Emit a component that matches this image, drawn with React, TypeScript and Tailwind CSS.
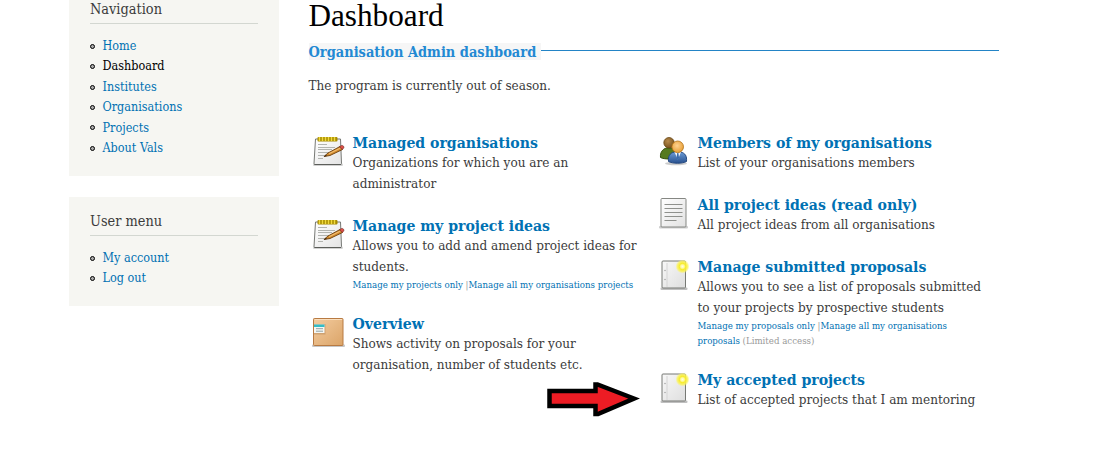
import type { ReactNode } from "react";

function NotepadIcon() {
  return (
    <svg width="34" height="34" viewBox="0 0 34 34" className="mt-px shrink-0">
      <defs>
        <linearGradient id="pad" x1="0" y1="0" x2="1" y2="1">
          <stop offset="0" stopColor="#ffffff" />
          <stop offset="1" stopColor="#e4e4e4" />
        </linearGradient>
      </defs>
      <rect x="1" y="29.5" width="30" height="2.5" rx="1.2" fill="#000" opacity=".18" />
      <path d="M3.500 5h25l1 24.500a1 1 0 0 1-1 1H3a1 1 0 0 1-1-1z" fill="url(#pad)" stroke="#777975" />
      <path d="M2.500 30.500h26.500" stroke="#5c5e5a" />
      <rect x="5.500" y="3" width="20" height="4.500" rx="1" fill="#a68a00" />
      <path d="M7.500 3v4M10.500 3v4M13.500 3v4M16.500 3v4M19.500 3v4M22.500 3v4" stroke="#f0d93c" strokeWidth="1.500" />
      <path d="M6 10.500h9M6 13.500h17M6 15.500h14M6 18.500h11M6 21.500h6M6 24.500h5" stroke="#b2b4b0" />
      <path d="M12 22.500l4-3.500L28 12.500l2.500 3L18 21.500z" fill="#d08a2c" stroke="#6b3d0c" strokeWidth=".9" />
      <path d="M17 19.700l11.500-5.700" stroke="#f3bd70" strokeWidth="1.100" />
      <path d="M27.500 12.700l2-1.200c1.800-.5 3 1.500 2.200 2.700l-1.700 1.300z" fill="#dc5047" stroke="#6d2320" strokeWidth=".6" />
      <path d="M11.500 22.800l2.200-2 1.300 1.300z" fill="#3b2a18" />
    </svg>
  );
}

function BoxIcon() {
  return (
    <svg width="34" height="34" viewBox="0 0 34 34" className="mt-[2px] shrink-0">
      <defs>
        <linearGradient id="box" x1="0" y1="0" x2="1" y2="1">
          <stop offset="0" stopColor="#f4cda0" />
          <stop offset="1" stopColor="#dba468" />
        </linearGradient>
      </defs>
      <rect x="0" y="28.500" width="33" height="2.500" rx="1" fill="#000" opacity=".22" />
      <rect x="1.500" y="2.500" width="29.500" height="27" rx=".8" fill="url(#box)" stroke="#b87a42" />
      <path d="M3 3.500h27" stroke="#fadfbe" />
      <path d="M2 8h11.500v10.500H2z" fill="#b98d5c" opacity=".55" />
      <rect x="2" y="8.500" width="10.500" height="8.500" fill="#f4f6f3" />
      <rect x="2" y="8.500" width="10.500" height="2.500" fill="#35bcc6" />
      <path d="M4 12.700h7M4 15.200h7" stroke="#93a3a3" />
    </svg>
  );
}

function PeopleIcon() {
  return (
    <svg width="34" height="34" viewBox="0 0 34 34" className="mt-[2px] shrink-0">
      <defs>
        <radialGradient id="headA" cx=".4" cy=".35" r=".7">
          <stop offset="0" stopColor="#b78a4c" />
          <stop offset="1" stopColor="#75501b" />
        </radialGradient>
        <radialGradient id="headB" cx=".45" cy=".4" r=".65">
          <stop offset="0" stopColor="#ffd391" />
          <stop offset="1" stopColor="#e59a2e" />
        </radialGradient>
        <linearGradient id="coat" x1="0" y1="0" x2="0" y2="1">
          <stop offset="0" stopColor="#6b9bd6" />
          <stop offset="1" stopColor="#28518f" />
        </linearGradient>
      </defs>
      <ellipse cx="19" cy="28.500" rx="11" ry="1.800" fill="#000" opacity=".2" />
      <path d="M3.500 22.500c-.5-5 2-8.500 6-9.500h6c4 1 6 5 5 9.500-4 2-13 2-17 0z" fill="#567a1e" stroke="#35500b" />
      <circle cx="12" cy="7.700" r="5.200" fill="url(#headA)" stroke="#6a4613" strokeWidth=".8" />
      <path d="M11.500 26.500c-.5-5 1-8.500 6-9.500h6c5 1 6.500 4.500 6 9.500-4 2.300-14 2.300-18 0z" fill="url(#coat)" stroke="#24487f" />
      <path d="M17.500 17h6.500l-3.200 7.500z" fill="#f3f6fa" />
      <path d="M20.200 18h1.200l.7 5-1.300 2-1.300-2z" fill="#3b6cab" />
      <circle cx="20.700" cy="11.800" r="5.800" fill="url(#headB)" stroke="#b16f13" strokeWidth=".8" />
    </svg>
  );
}

function DocumentIcon() {
  return (
    <svg width="34" height="34" viewBox="0 0 34 34" className="mt-px shrink-0">
      <defs>
        <linearGradient id="sheet" x1="0" y1="0" x2="1" y2="1">
          <stop offset="0" stopColor="#ffffff" />
          <stop offset="1" stopColor="#e2e2e2" />
        </linearGradient>
      </defs>
      <rect x="2" y="30" width="29" height="2.500" rx="1" fill="#000" opacity=".2" />
      <rect x="4" y="2.500" width="25" height="28.500" rx="1" fill="url(#sheet)" stroke="#858783" />
      <path d="M7.500 8.500h18M7.500 12.500h18M7.500 16.500h18M7.500 20.500h18M7.500 24.500h12" stroke="#8f918d" />
    </svg>
  );
}

function NewDocumentIcon() {
  return (
    <svg width="34" height="34" viewBox="0 0 34 34" className="mt-[2px] shrink-0">
      <defs>
        <linearGradient id="page" x1="0" y1="0" x2="1" y2="1">
          <stop offset="0" stopColor="#f8f8f8" />
          <stop offset="1" stopColor="#dedede" />
        </linearGradient>
        <radialGradient id="glow">
          <stop offset="0" stopColor="#fffde0" />
          <stop offset=".25" stopColor="#fff9a0" />
          <stop offset=".45" stopColor="#f7ec2c" />
          <stop offset=".75" stopColor="#fbf35a" stopOpacity=".8" />
          <stop offset="1" stopColor="#fff86b" stopOpacity="0" />
        </radialGradient>
      </defs>
      <rect x="3.500" y="28.500" width="27" height="2.500" rx="1" fill="#000" opacity=".25" />
      <rect x="5" y="2" width="23.500" height="27" rx="1" fill="url(#page)" stroke="#777975" />
      <path d="M10 4v24" stroke="#d4d4d4" />
      <circle cx="8" cy="11.500" r=".7" fill="#999" />
      <circle cx="8" cy="20.500" r=".7" fill="#999" />
      <circle cx="25.500" cy="7.500" r="7" fill="url(#glow)" />
    </svg>
  );
}

function Menu({ title, items, active }: { title: string; items: string[]; active?: string }) {
  return (
    <nav className="bg-[#f6f6f2] px-[21px]">
      <h2 className="h-[25px] border-b border-[#d3d7d1] pt-px text-[14.4px] leading-[18px] text-[#3b3b3b]">{title}</h2>
      <ul className="pt-[12px] pb-[17px] text-[12.5px] leading-[20.4px] text-[#0071b3]">
        {items.map((item) => (
          <li key={item} className="flex items-center gap-[7.500px] whitespace-nowrap">
            <span className="size-[5px] rounded-full border border-black bg-[#aaa]" />
            <a className={item === active ? "text-black" : ""}>{item}</a>
          </li>
        ))}
      </ul>
    </nav>
  );
}

function Item({ icon, title, lines, children }: { icon: ReactNode; title: string; lines: string[]; children?: ReactNode }) {
  return (
    <section className="flex gap-[6.500px] whitespace-nowrap">
      {icon}
      <div>
        <h3 className="h-[19px] text-[15.65px] leading-[20px] font-bold text-[#0071b3]">{title}</h3>
        {lines.map((line) => (
          <p key={line} className="text-[13.42px] leading-[21px]">{line}</p>
        ))}
        {children}
      </div>
    </section>
  );
}

export default function App() {
  return (
    <div className="relative flex h-[472px] overflow-hidden bg-white font-['DejaVu_Serif_Condensed','DejaVu_Serif',serif] text-[#3b3b3b]">
      <aside className="ml-[69px] flex w-[210px] shrink-0 flex-col gap-[21px]">
        <div className="h-[176px] bg-[#f6f6f2]">
          <div className="-mt-px">
            <Menu title="Navigation" active="Dashboard" items={["Home", "Dashboard", "Institutes", "Organisations", "Projects", "About Vals"]} />
          </div>
        </div>
        <div className="h-[109px] bg-[#f6f6f2] pt-[14px]">
          <Menu title="User menu" items={["My account", "Log out"]} />
        </div>
      </aside>
      <main className="ml-[29.500px] w-[690px]">
        <h1 className="h-[42px] font-['Liberation_Serif',serif] text-[31.2px] leading-[32px] text-black">Dashboard</h1>
        <div className="flex h-[18px] items-center">
          <h2 className="bg-[#f6f6f6] pr-[5px] text-[14.46px] leading-[17px] font-bold whitespace-nowrap text-[#2389d3]">Organisation Admin dashboard</h2>
          <div className="-mt-px h-px grow bg-[#2384c6]" />
        </div>
        <p className="mt-[15px] h-[58px] text-[13.42px] leading-[21px]">The program is currently out of season.</p>
        <div className="flex">
          <div className="ml-[3.500px] flex w-[345px] flex-col gap-[22px]">
            <Item icon={<NotepadIcon />} title="Managed organisations" lines={["Organizations for which you are an", "administrator"]} />
            <Item icon={<NotepadIcon />} title="Manage my project ideas" lines={["Allows you to add and amend project ideas for", "students."]}>
              <p className="text-[9.6px] leading-[15px] text-[#999]">
                <a className="text-[#0071b3]">Manage my projects only</a> |<a className="text-[#0071b3]">Manage all my organisations projects</a>
              </p>
            </Item>
            <Item icon={<BoxIcon />} title="Overview" lines={["Shows activity on proposals for your", "organisation, number of students etc."]} />
          </div>
          <div className="flex flex-col gap-[22px]">
            <Item icon={<PeopleIcon />} title="Members of my organisations" lines={["List of your organisations members"]} />
            <Item icon={<DocumentIcon />} title="All project ideas (read only)" lines={["All project ideas from all organisations"]} />
            <Item icon={<NewDocumentIcon />} title="Manage submitted proposals" lines={["Allows you to see a list of proposals submitted", "to your projects by prospective students"]}>
              <p className="text-[9.6px] leading-[15px] text-[#999]">
                <a className="text-[#0071b3]">Manage my proposals only</a> |<a className="text-[#0071b3]">Manage all my organisations<br />proposals</a> (Limited access)
              </p>
            </Item>
            <Item icon={<NewDocumentIcon />} title="My accepted projects" lines={["List of accepted projects that I am mentoring"]} />
          </div>
        </div>
      </main>
      <svg width="94" height="38" viewBox="0 0 94 38" className="absolute top-[380px] left-[546px]">
        <path d="M3.500 11h46V4.500h2L88 18.500 52 34h-2.500v-8h-46z" fill="#ed1c24" stroke="#000" strokeWidth="4.500" />
      </svg>
    </div>
  );
}
